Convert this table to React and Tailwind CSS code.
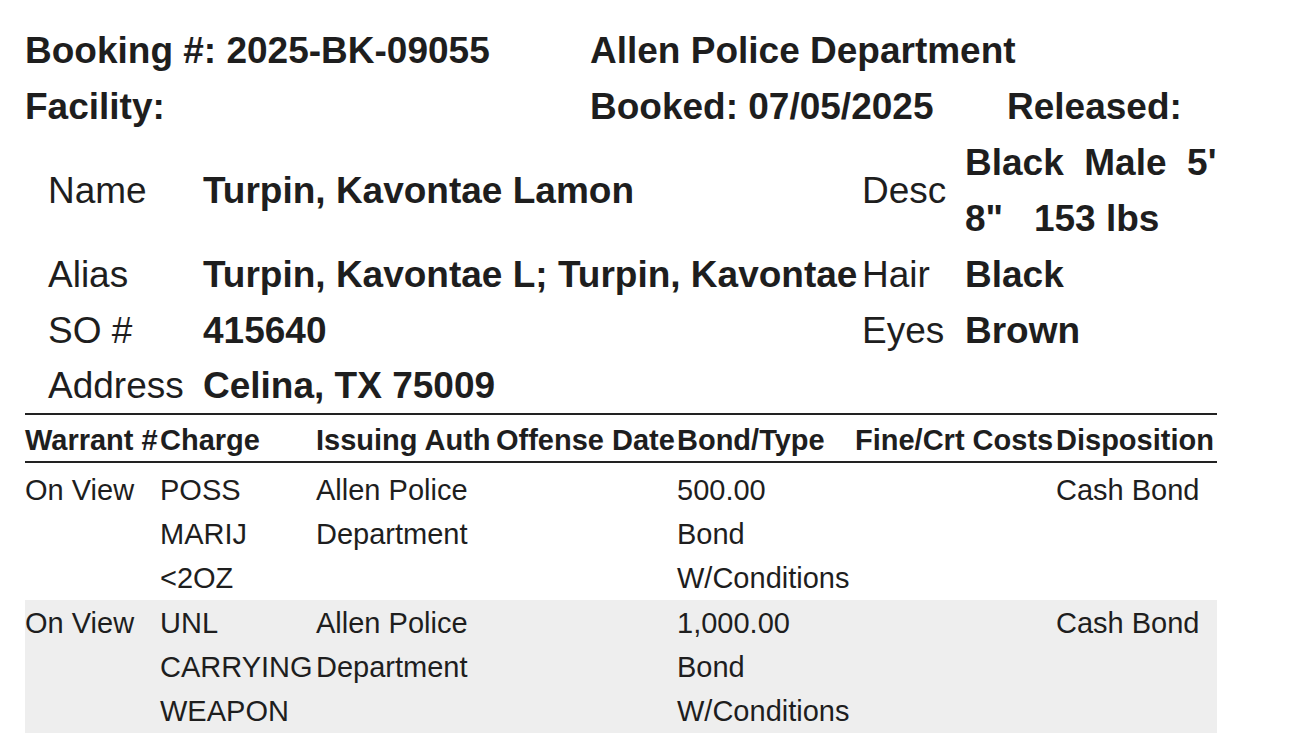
import React from 'react';

const info = [
  { label: 'Alias', value: 'Turpin, Kavontae L; Turpin, Kavontae', label2: 'Hair', value2: 'Black' },
  { label: 'SO #', value: '415640', label2: 'Eyes', value2: 'Brown' },
  { label: 'Address', value: 'Celina, TX 75009', label2: '', value2: '' },
];

const charges = [
  {
    warrant: 'On View',
    charge: ['POSS', 'MARIJ', '<2OZ'],
    auth: ['Allen Police', 'Department'],
    offense: '',
    bond: ['500.00', 'Bond', 'W/Conditions'],
    fine: '',
    disposition: 'Cash Bond',
  },
  {
    warrant: 'On View',
    charge: ['UNL', 'CARRYING', 'WEAPON'],
    auth: ['Allen Police', 'Department'],
    offense: '',
    bond: ['1,000.00', 'Bond', 'W/Conditions'],
    fine: '',
    disposition: 'Cash Bond',
  },
];

const Lines = ({ items }) => items.map((t, i) => <div key={i} className="whitespace-nowrap">{t}</div>);

const App = () => {
  return (
    <div className="min-h-screen bg-white text-[#1e1e1e] font-['Liberation_Sans',Arial,sans-serif] px-[25px] pt-[23px]">
      <div className="w-[1192px]">
        {/* header */}
        <div className="grid grid-cols-[565px_417px_1fr] text-[37px] font-bold leading-[56px] whitespace-nowrap">
          <div>Booking #: 2025-BK-09055</div>
          <div className="col-span-2">Allen Police Department</div>
          <div>Facility:</div>
          <div>Booked: 07/05/2025</div>
          <div>Released:</div>
        </div>

        {/* person */}
        <table className="ml-[23px] w-[1169px] table-fixed border-collapse text-[37px] leading-[56px]">
          <colgroup>
            <col className="w-[155px]" />
            <col className="w-[659px]" />
            <col className="w-[103px]" />
            <col className="w-[252px]" />
          </colgroup>
          <tbody>
            <tr>
              <td className="p-0 align-middle">Name</td>
              <td className="p-0 align-middle font-bold whitespace-nowrap">Turpin, Kavontae Lamon</td>
              <td className="p-0 align-middle">Desc</td>
              <td className="p-0 align-middle font-bold whitespace-pre">
                <div>{"Black  Male  5'"}</div>
                <div>{'8"   153 lbs'}</div>
              </td>
            </tr>
            {info.map((r, i) => {
              const lh = i === info.length - 1 ? 'leading-[54px]' : '';
              return (
                <tr key={r.label} className={lh}>
                  <td className="p-0">{r.label}</td>
                  <td className="p-0 font-bold whitespace-nowrap">{r.value}</td>
                  <td className="p-0">{r.label2}</td>
                  <td className="p-0 font-bold">{r.value2}</td>
                </tr>
              );
            })}
          </tbody>
        </table>

        {/* charges */}
        <table className="w-[1192px] table-fixed border-collapse text-[29px] leading-[44px]">
          <colgroup>
            <col className="w-[135px]" />
            <col className="w-[156px]" />
            <col className="w-[180px]" />
            <col className="w-[181px]" />
            <col className="w-[178px]" />
            <col className="w-[201px]" />
            <col className="w-[161px]" />
          </colgroup>
          <thead>
            <tr className="border-t-2 border-b-2 border-[#222]">
              {['Warrant #', 'Charge', 'Issuing Auth', 'Offense Date', 'Bond/Type', 'Fine/Crt Costs', 'Disposition'].map((h) => (
                <th key={h} className="p-0 pt-[4px] leading-[42px] text-left font-bold whitespace-nowrap">{h}</th>
              ))}
            </tr>
          </thead>
          <tbody>
            {charges.map((c, i) => {
              const td = i === 0 ? 'p-0 pt-[5px] align-top' : 'p-0 pt-[1px] align-top';
              return (
                <tr key={i} className={i % 2 === 1 ? 'bg-[#eeeeee]' : ''}>
                  <td className={td}><div className="whitespace-nowrap">{c.warrant}</div></td>
                  <td className={td}><Lines items={c.charge} /></td>
                  <td className={td}><Lines items={c.auth} /></td>
                  <td className={td}>{c.offense}</td>
                  <td className={td}><Lines items={c.bond} /></td>
                  <td className={td}>{c.fine}</td>
                  <td className={td}><div className="whitespace-nowrap">{c.disposition}</div></td>
                </tr>
              );
            })}
          </tbody>
        </table>
      </div>
    </div>
  );
};

export default App;
